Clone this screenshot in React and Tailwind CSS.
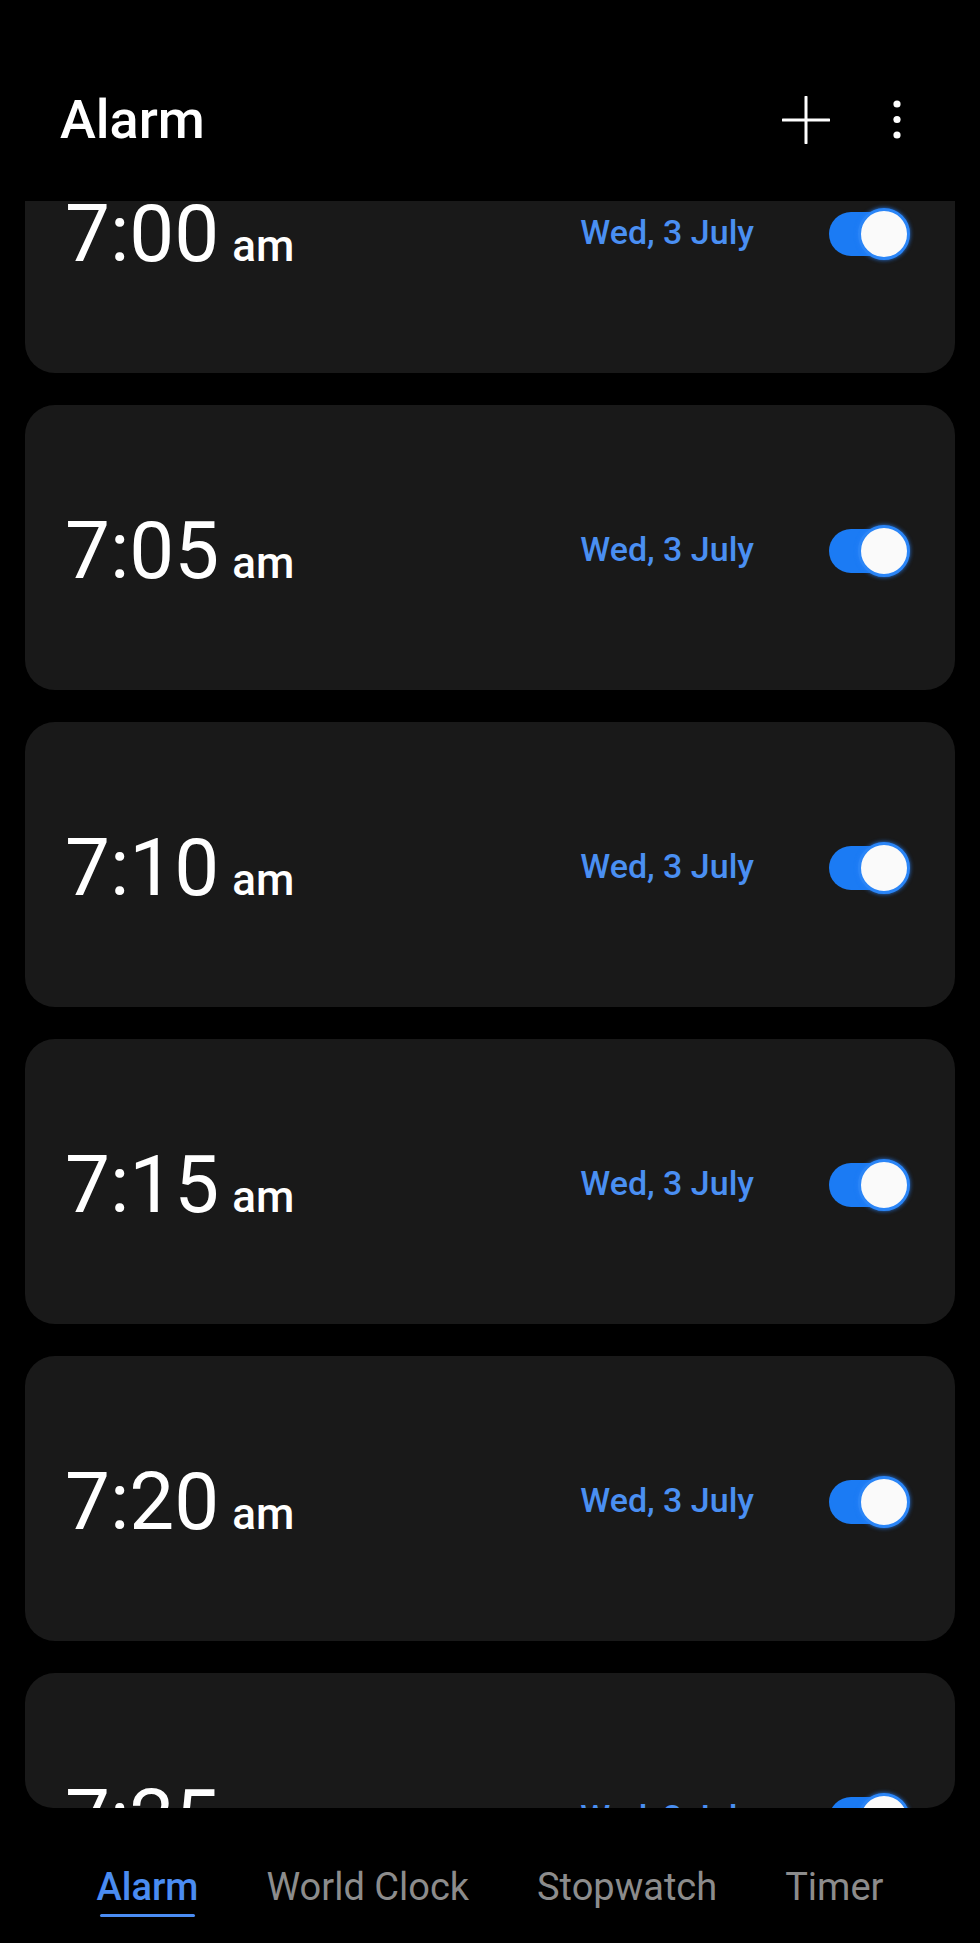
import React from "react";

const ALARMS = [
  { id: "a1", time: "7:00", date: "Wed, 3 July" },
  { id: "a2", time: "7:05", date: "Wed, 3 July" },
  { id: "a3", time: "7:10", date: "Wed, 3 July" },
  { id: "a4", time: "7:15", date: "Wed, 3 July" },
  { id: "a5", time: "7:20", date: "Wed, 3 July" },
  { id: "a6", time: "7:25", date: "Wed, 3 July" },
];

const TABS = [
  { id: "alarm", label: "Alarm", active: true },
  { id: "world", label: "World Clock" },
  { id: "stopwatch", label: "Stopwatch" },
  { id: "timer", label: "Timer" },
];

function PlusIcon() {
  return (
    <svg width="48" height="48" viewBox="0 0 48 48" fill="none" aria-hidden="true">
      <path d="M24 1v46M1 24h46" stroke="white" strokeWidth="3" strokeLinecap="round" />
    </svg>
  );
}

function MoreIcon() {
  return (
    <svg width="24" height="48" viewBox="0 0 24 48" fill="white" aria-hidden="true">
      <circle cx="12" cy="8" r="3.6" />
      <circle cx="12" cy="23.5" r="3.6" />
      <circle cx="12" cy="39" r="3.6" />
    </svg>
  );
}

function Toggle() {
  return (
    <div className="relative h-[52px] w-[81px] shrink-0">
      <div className="absolute left-0 top-[4px] h-[44px] w-[72px] rounded-full bg-[#1b7bf4]" />
      <div className="absolute right-0 top-0 h-[52px] w-[52px] rounded-full border-[3px] border-[#2a85f7] bg-[#fafafa] shadow-[0_0_4px_rgba(40,130,250,0.9)]" />
    </div>
  );
}

function AlarmCard({ alarm }) {
  return (
    <div className="flex h-[285px] shrink-0 items-center rounded-[30px] bg-[#191919] pl-[40px] pr-[45px] pt-[6px]">
      <div className="flex items-baseline text-white">
        <span className="text-[80px] leading-none">{alarm.time}</span>
        <span className="ml-[13px] text-[44px] font-medium leading-none">am</span>
      </div>
      <div className="ml-auto mr-[75px] -mt-[4px] text-[34px] font-medium leading-none text-[#4a8ff2]">
        {alarm.date}
      </div>
      <Toggle />
    </div>
  );
}

export default function App() {
  return (
    <div className="flex h-[1943px] w-[980px] flex-col overflow-hidden bg-black font-['Roboto',sans-serif]">
      <header className="flex h-[201px] shrink-0 items-center pl-[60px] pr-[71px] pt-[39px]">
        <h1 className="text-[54px] font-medium leading-none text-white">Alarm</h1>
        <div className="ml-auto flex items-center gap-[55px]">
          <PlusIcon />
          <MoreIcon />
        </div>
      </header>

      <div className="mx-[25px] h-[1607px] shrink-0 overflow-hidden rounded-b-[28px]">
        <div className="-mt-[113px] flex flex-col gap-[32px]">
          {ALARMS.map((alarm) => (
            <AlarmCard key={alarm.id} alarm={alarm} />
          ))}
        </div>
      </div>

      <nav className="flex justify-center gap-[68px] pt-[60px]">
        {TABS.map((tab) => (
          <div key={tab.id} className="flex flex-col items-stretch">
            <span
              className={
                tab.active
                  ? "text-[38px] font-medium leading-none text-[#4a8cf2]"
                  : "text-[38px] leading-none text-[#8c8c8c]"
              }
            >
              {tab.label}
            </span>
            {tab.active ? <div className="mx-[3px] mt-[8px] h-[3px] rounded-full bg-[#4a8cf2]" /> : null}
          </div>
        ))}
      </nav>
    </div>
  );
}
